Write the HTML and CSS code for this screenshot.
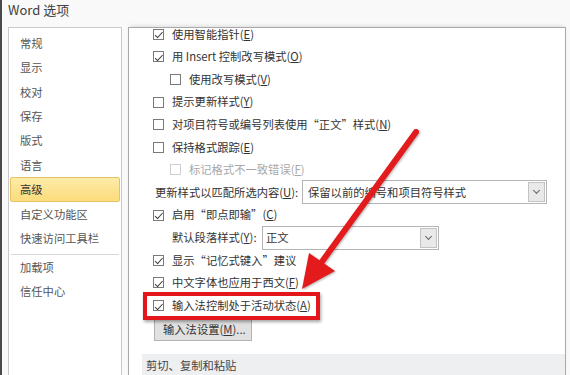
FILE: index.html
```html
<!doctype html>
<html>
<head>
	<meta charset="utf-8">
	<title>Word 选项</title>
	<link rel="stylesheet" href="styles.css">
</head>
<body>
	<div class="window">
		<div class="titlebar">Word 选项</div>
		<div class="main">
			<ul class="nav">
				<li>常规</li>
				<li>显示</li>
				<li>校对</li>
				<li>保存</li>
				<li>版式</li>
				<li>语言</li>
				<li class="current">高级</li>
				<li>自定义功能区</li>
				<li>快速访问工具栏</li>
				<li class="sep"></li>
				<li>加载项</li>
				<li>信任中心</li>
			</ul>
			<div class="pane">
				<div class="rows">
					<div class="row"><span class="box on"></span><span>使用智能指针(<u>E</u>)</span></div>
					<div class="row"><span class="box on"></span><span>用 Insert 控制改写模式(<u>O</u>)</span></div>
					<div class="row sub"><span class="box"></span><span>使用改写模式(<u>V</u>)</span></div>
					<div class="row"><span class="box"></span><span>提示更新样式(<u>Y</u>)</span></div>
					<div class="row"><span class="box"></span><span>对项目符号或编号列表使用“正文”样式(<u>N</u>)</span></div>
					<div class="row"><span class="box"></span><span>保持格式跟踪(<u>E</u>)</span></div>
					<div class="row sub off"><span class="box"></span><span>标记格式不一致错误(<u>F</u>)</span></div>
					<div class="row field">
						<span class="label wide">更新样式以匹配所选内容(<u>U</u>):</span>
						<span class="select wide">保留以前的编号和项目符号样式<span class="drop"></span></span>
					</div>
					<div class="row"><span class="box on"></span><span>启用“即点即输”(<u>C</u>)</span></div>
					<div class="row field sub">
						<span class="label">默认段落样式(<u>Y</u>):</span>
						<span class="select">正文<span class="drop"></span></span>
					</div>
					<div class="row"><span class="box on"></span><span>显示“记忆式键入”建议</span></div>
					<div class="row"><span class="box on"></span><span>中文字体也应用于西文(<u>F</u>)</span></div>
					<div class="row mark"><span class="box on"></span><span>输入法控制处于活动状态(<u>A</u>)</span></div>
				</div>
				<div class="btn">输入法设置(<u>M</u>)...</div>
				<div class="section">剪切、复制和粘贴</div>
			</div>
		</div>
		<svg class="arrow" width="570" height="375" viewBox="0 0 570 375">
			<line x1="416" y1="132" x2="321" y2="263" stroke="#e31b1d" stroke-width="6" stroke-linecap="round"/>
			<polygon points="302,289 309,253 335,271" fill="#e31b1d"/>
		</svg>
	</div>
</body>
</html>
```

FILE: styles.css
```css
* {margin:0; padding:0; box-sizing:border-box;}
body {font:11.3px/1 "Noto Sans CJK SC", "Noto Sans", sans-serif; color:#333; background:#fff;}
u {text-decoration:underline; text-underline-offset:1px;}

.window {position:relative; width:570px; height:375px; overflow:hidden; background:#f9f9f9; box-shadow:inset 2px 0 #4a4a4a;}
.titlebar {height:27px; padding-left:8px; font-size:13px; line-height:19px; color:#404040;}
.main {display:flex; gap:6px; height:348px; padding-left:8px;}

/* left menu */
.nav {list-style:none; width:114px; background:#fff; border:1px solid #c9c9c9; border-bottom:0; padding-top:2.8px; color:#555;}
.nav li {height:24.4px; line-height:24.4px; margin:0 1px; padding-left:10px;}
.nav li.current {background:linear-gradient(#fdeba8, #fcdc7c); border:1px solid #e6c466; border-radius:2px; padding-left:9px; line-height:22.4px; color:#333;}
.nav li.sep {height:1px; margin:3.6px 2px 0; background:#d8d8d8;}

/* right options */
.pane {width:438px; background:#fff; border:1px solid #a9a9a9; border-bottom:0; overflow:hidden; box-shadow:0 -3px 4px -2px rgba(0,0,0,.12);}
.rows {margin-top:-5px; padding-left:24px;}
.row {display:flex; align-items:center; gap:8px; height:22.6px; white-space:nowrap;}
.row.sub {padding-left:17px;}
.row.off {color:#a9a9a9;}
.row.field {gap:0; padding-left:2px;}
.row.field.sub {padding-left:19px;}

.box {position:relative; flex:none; width:11px; height:11px; border:1px solid #7a7a7a; background:#fff;}
.off .box {border-color:#cfcfcf;}
.box.on::after {content:""; position:absolute; left:3.2px; top:0.6px; width:3px; height:6.5px; border:solid #3c3c3c; border-width:0 1.4px 1.4px 0; transform:rotate(42deg);}

.label {width:90px;}
.label.wide {width:147px;}
.select {position:relative; display:flex; align-items:center; width:177px; height:24px; padding-left:3px; border:1px solid #b4b4b4; background:#fff; color:#333;}
.select.wide {width:245px; padding-left:5px;}
.drop {position:absolute; right:1px; top:1px; width:17px; height:20px; background:#e9e9e9; border:1px solid #c3c3c3;}
.drop::after {content:""; position:absolute; left:5px; top:5px; width:4px; height:4px; border:solid #666; border-width:0 1px 1px 0; transform:rotate(45deg);}

.mark {position:relative; width:fit-content;}
.mark::after {content:""; position:absolute; left:-10px; right:-9px; top:-2px; bottom:-3px; border:4px solid #e2161b; box-shadow:1px 2px 3px rgba(0,0,0,.35);}

.btn {width:98px; height:23px; margin:1px 0 0 25px; line-height:21px; padding-left:8px; background:#e1e1e1; border:1px solid #b2b2b2; color:#333;}
.section {height:22px; margin:13px 0 0 13px; padding-left:4px; line-height:22px; background:#eeeff1; color:#444;}

.arrow {position:absolute; left:0; top:0; pointer-events:none; filter:drop-shadow(1px 1px 1px rgba(0,0,0,.3));}
```
